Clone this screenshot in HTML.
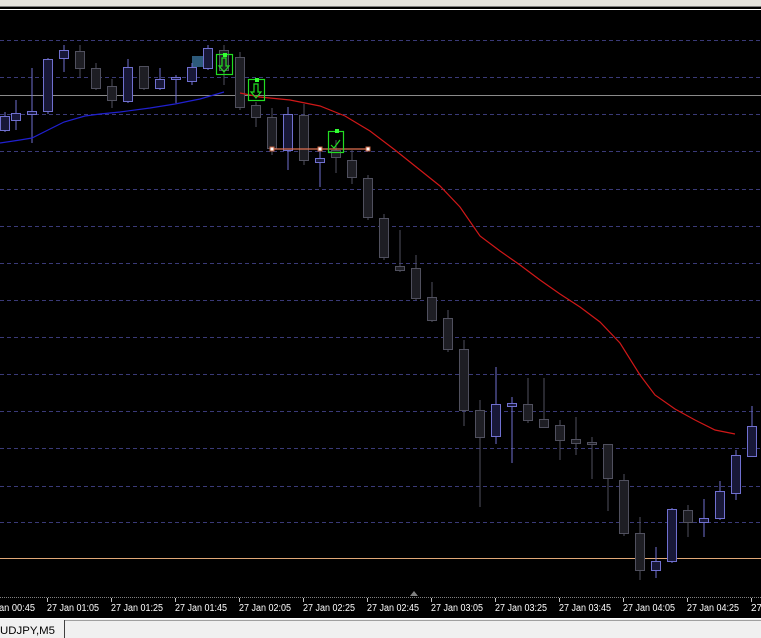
<!DOCTYPE html>
<html><head><meta charset="utf-8"><style>
html,body{margin:0;padding:0;background:#000;width:761px;height:638px;overflow:hidden;font-family:"Liberation Sans",sans-serif}
</style></head><body>
<svg width="761" height="638" xmlns="http://www.w3.org/2000/svg" style="display:block">
<rect x="0" y="0" width="761" height="638" fill="#000"/>
<rect x="0" y="0" width="761" height="6" fill="#e4e2dc"/>
<line x1="0" y1="6.5" x2="761" y2="6.5" stroke="#808080"/>
<line x1="0" y1="9.5" x2="761" y2="9.5" stroke="#ffffff"/>
<g stroke="#3a3a78" stroke-dasharray="4,3" stroke-width="1">
<line x1="0" y1="40.5" x2="761" y2="40.5"/><line x1="0" y1="77.5" x2="761" y2="77.5"/>
<line x1="0" y1="114.5" x2="761" y2="114.5"/><line x1="0" y1="151.5" x2="761" y2="151.5"/>
<line x1="0" y1="189.5" x2="761" y2="189.5"/><line x1="0" y1="226.5" x2="761" y2="226.5"/>
<line x1="0" y1="263.5" x2="761" y2="263.5"/><line x1="0" y1="300.5" x2="761" y2="300.5"/>
<line x1="0" y1="337.5" x2="761" y2="337.5"/><line x1="0" y1="374.5" x2="761" y2="374.5"/>
<line x1="0" y1="411.5" x2="761" y2="411.5"/><line x1="0" y1="448.5" x2="761" y2="448.5"/>
<line x1="0" y1="486.5" x2="761" y2="486.5"/><line x1="0" y1="522.5" x2="761" y2="522.5"/>
</g>
<line x1="0" y1="95.5" x2="761" y2="95.5" stroke="#8a8a8a"/>
<line x1="0" y1="558.5" x2="761" y2="558.5" stroke="#e0a878"/>
<rect x="192" y="56" width="12" height="11" fill="#2d5a7a"/>
<g stroke-width="1">
<g stroke="#7070d0" fill="#181838">
<line x1="5" y1="112" x2="5" y2="132"/><rect x="0.5" y="116.5" width="9" height="14"/>
<line x1="16" y1="100" x2="16" y2="130"/><rect x="11.5" y="113.5" width="9" height="7"/>
<line x1="32" y1="68" x2="32" y2="143"/><rect x="27.5" y="111.5" width="9" height="3"/>
<line x1="48" y1="58" x2="48" y2="114"/><rect x="43.5" y="59.5" width="9" height="52"/>
<line x1="64" y1="45" x2="64" y2="72"/><rect x="59.5" y="50.5" width="9" height="8"/>
<line x1="128" y1="59" x2="128" y2="103"/><rect x="123.5" y="67.5" width="9" height="34"/>
<line x1="160" y1="68" x2="160" y2="90"/><rect x="155.5" y="79.5" width="9" height="9"/>
<line x1="176" y1="75" x2="176" y2="103"/><rect x="171.5" y="77.5" width="9" height="2"/>
<line x1="192" y1="63" x2="192" y2="85"/><rect x="187.5" y="67.5" width="9" height="14"/>
<line x1="208" y1="45" x2="208" y2="70"/><rect x="203.5" y="48.5" width="9" height="20"/>
<line x1="288" y1="107" x2="288" y2="170"/><rect x="283.5" y="114.5" width="9" height="36"/>
<line x1="320" y1="150" x2="320" y2="187"/><rect x="315.5" y="158.5" width="9" height="4"/>
<line x1="496" y1="367" x2="496" y2="444"/><rect x="491.5" y="404.5" width="9" height="32"/>
<line x1="512" y1="397" x2="512" y2="463"/><rect x="507.5" y="403.5" width="9" height="3"/>
<line x1="656" y1="547" x2="656" y2="578"/><rect x="651.5" y="561.5" width="9" height="9"/>
<line x1="672" y1="508" x2="672" y2="563"/><rect x="667.5" y="509.5" width="9" height="52"/>
<line x1="704" y1="499" x2="704" y2="537"/><rect x="699.5" y="518.5" width="9" height="4"/>
<line x1="720" y1="481" x2="720" y2="520"/><rect x="715.5" y="491.5" width="9" height="27"/>
<line x1="736" y1="450" x2="736" y2="500"/><rect x="731.5" y="455.5" width="9" height="38"/>
<line x1="752" y1="406" x2="752" y2="456"/><rect x="747.5" y="426.5" width="9" height="30"/>
</g>
<g stroke="#50505e" fill="#1e1e24">
<line x1="80" y1="45" x2="80" y2="77"/><rect x="75.5" y="51.5" width="9" height="17"/>
<line x1="96" y1="63" x2="96" y2="90"/><rect x="91.5" y="68.5" width="9" height="20"/>
<line x1="112" y1="79" x2="112" y2="108"/><rect x="107.5" y="86.5" width="9" height="14"/>
<line x1="144" y1="66" x2="144" y2="90"/><rect x="139.5" y="66.5" width="9" height="22"/>
<line x1="224" y1="45" x2="224" y2="85"/><rect x="219.5" y="50.5" width="9" height="20"/>
<line x1="240" y1="52" x2="240" y2="110"/><rect x="235.5" y="57.5" width="9" height="50"/>
<line x1="256" y1="102" x2="256" y2="127"/><rect x="251.5" y="105.5" width="9" height="12"/>
<line x1="272" y1="108" x2="272" y2="155"/><rect x="267.5" y="117.5" width="9" height="31"/>
<line x1="304" y1="104" x2="304" y2="165"/><rect x="299.5" y="115.5" width="9" height="45"/>
<line x1="336" y1="140" x2="336" y2="173"/><rect x="331.5" y="150.5" width="9" height="7"/>
<line x1="352" y1="150" x2="352" y2="184"/><rect x="347.5" y="160.5" width="9" height="17"/>
<line x1="368" y1="175" x2="368" y2="220"/><rect x="363.5" y="178.5" width="9" height="39"/>
<line x1="384" y1="214" x2="384" y2="260"/><rect x="379.5" y="218.5" width="9" height="39"/>
<line x1="400" y1="230" x2="400" y2="272"/><rect x="395.5" y="266.5" width="9" height="4"/>
<line x1="416" y1="255" x2="416" y2="300"/><rect x="411.5" y="268.5" width="9" height="30"/>
<line x1="432" y1="282" x2="432" y2="322"/><rect x="427.5" y="297.5" width="9" height="23"/>
<line x1="448" y1="310" x2="448" y2="352"/><rect x="443.5" y="318.5" width="9" height="31"/>
<line x1="464" y1="340" x2="464" y2="426"/><rect x="459.5" y="349.5" width="9" height="61"/>
<line x1="480" y1="400" x2="480" y2="507"/><rect x="475.5" y="410.5" width="9" height="27"/>
<line x1="528" y1="378" x2="528" y2="423"/><rect x="523.5" y="404.5" width="9" height="16"/>
<line x1="544" y1="378" x2="544" y2="427"/><rect x="539.5" y="419.5" width="9" height="8"/>
<line x1="560" y1="420" x2="560" y2="460"/><rect x="555.5" y="425.5" width="9" height="15"/>
<line x1="576" y1="417" x2="576" y2="455"/><rect x="571.5" y="439.5" width="9" height="4"/>
<line x1="592" y1="437" x2="592" y2="479"/><rect x="587.5" y="442.5" width="9" height="2"/>
<line x1="608" y1="444" x2="608" y2="511"/><rect x="603.5" y="444.5" width="9" height="34"/>
<line x1="624" y1="474" x2="624" y2="536"/><rect x="619.5" y="480.5" width="9" height="53"/>
<line x1="640" y1="517" x2="640" y2="580"/><rect x="635.5" y="533.5" width="9" height="37"/>
<line x1="688" y1="505" x2="688" y2="537"/><rect x="683.5" y="510.5" width="9" height="12"/>
</g>
</g>
<polyline fill="none" stroke="#2020d0" stroke-width="1.2" points="0,143 20,140 32,138 48,130 64,122 85,116 100,114 120,112 150,108 175,104 200,99 224,92"/>
<polyline fill="none" stroke="#d01818" stroke-width="1.2" points="240,93 260,97 290,100 320,106 345,116 370,131 395,150 420,170 440,186 460,207 480,236 500,251 520,265 540,280 560,294 580,307 600,322 620,343 640,375 655,395 675,409 695,420 715,430 735,434"/>
<line x1="272" y1="149" x2="368" y2="149" stroke="#e07050" stroke-width="1.2"/>
<g fill="#ffffff" stroke="#c06040"><rect x="270" y="147" width="4" height="4"/><rect x="318" y="147" width="4" height="4"/><rect x="366" y="147" width="4" height="4"/></g>
<g fill="none" stroke="#22dd22" stroke-width="1.2">
<rect x="216.5" y="54.5" width="16" height="20"/><rect x="248.5" y="79.5" width="16" height="21"/><rect x="328.5" y="131.5" width="15" height="21"/>
<path d="M222 58v8h-3l5 6 5-6h-3v-8z"/><path d="M254 84v8h-3l5 6 5-6h-3v-8z"/><path d="M331 145l3 3 6-8"/>
</g>
<g fill="#33ff33"><rect x="223" y="53" width="4" height="4"/><rect x="255" y="78" width="4" height="4"/><rect x="335" y="129" width="4" height="4"/></g>
<line x1="0" y1="597.5" x2="761" y2="597.5" stroke="#808080" stroke-dasharray="1,1"/>
<polygon points="410,596 414,591 418,596" fill="#808080"/>
<g stroke="#c0c0c0">
<line x1="47.5" y1="598" x2="47.5" y2="602"/><line x1="111.5" y1="598" x2="111.5" y2="602"/><line x1="175.5" y1="598" x2="175.5" y2="602"/><line x1="239.5" y1="598" x2="239.5" y2="602"/><line x1="303.5" y1="598" x2="303.5" y2="602"/><line x1="367.5" y1="598" x2="367.5" y2="602"/><line x1="431.5" y1="598" x2="431.5" y2="602"/><line x1="495.5" y1="598" x2="495.5" y2="602"/><line x1="559.5" y1="598" x2="559.5" y2="602"/><line x1="623.5" y1="598" x2="623.5" y2="602"/><line x1="687.5" y1="598" x2="687.5" y2="602"/><line x1="751.5" y1="598" x2="751.5" y2="602"/></g>
<g fill="#ffffff" font-family="Liberation Sans, sans-serif" font-size="10">
<text x="-1" y="611" textLength="36" lengthAdjust="spacingAndGlyphs">an 00:45</text>
<text x="47" y="611" textLength="52" lengthAdjust="spacingAndGlyphs">27 Jan 01:05</text>
<text x="111" y="611" textLength="52" lengthAdjust="spacingAndGlyphs">27 Jan 01:25</text>
<text x="175" y="611" textLength="52" lengthAdjust="spacingAndGlyphs">27 Jan 01:45</text>
<text x="239" y="611" textLength="52" lengthAdjust="spacingAndGlyphs">27 Jan 02:05</text>
<text x="303" y="611" textLength="52" lengthAdjust="spacingAndGlyphs">27 Jan 02:25</text>
<text x="367" y="611" textLength="52" lengthAdjust="spacingAndGlyphs">27 Jan 02:45</text>
<text x="431" y="611" textLength="52" lengthAdjust="spacingAndGlyphs">27 Jan 03:05</text>
<text x="495" y="611" textLength="52" lengthAdjust="spacingAndGlyphs">27 Jan 03:25</text>
<text x="559" y="611" textLength="52" lengthAdjust="spacingAndGlyphs">27 Jan 03:45</text>
<text x="623" y="611" textLength="52" lengthAdjust="spacingAndGlyphs">27 Jan 04:05</text>
<text x="687" y="611" textLength="52" lengthAdjust="spacingAndGlyphs">27 Jan 04:25</text>
<text x="751" y="611">27</text>
</g>
<rect x="0" y="618" width="761" height="20" fill="#f0f0f0"/>
<line x1="0" y1="618.5" x2="761" y2="618.5" stroke="#ffffff"/>
<line x1="64.5" y1="620" x2="64.5" y2="638" stroke="#404040"/>
<line x1="65" y1="620.5" x2="761" y2="620.5" stroke="#a0a0a0"/>
<text x="0" y="634" font-family="Liberation Sans, sans-serif" font-size="11" fill="#000" textLength="55" lengthAdjust="spacingAndGlyphs">UDJPY,M5</text>
</svg>
</body></html>
